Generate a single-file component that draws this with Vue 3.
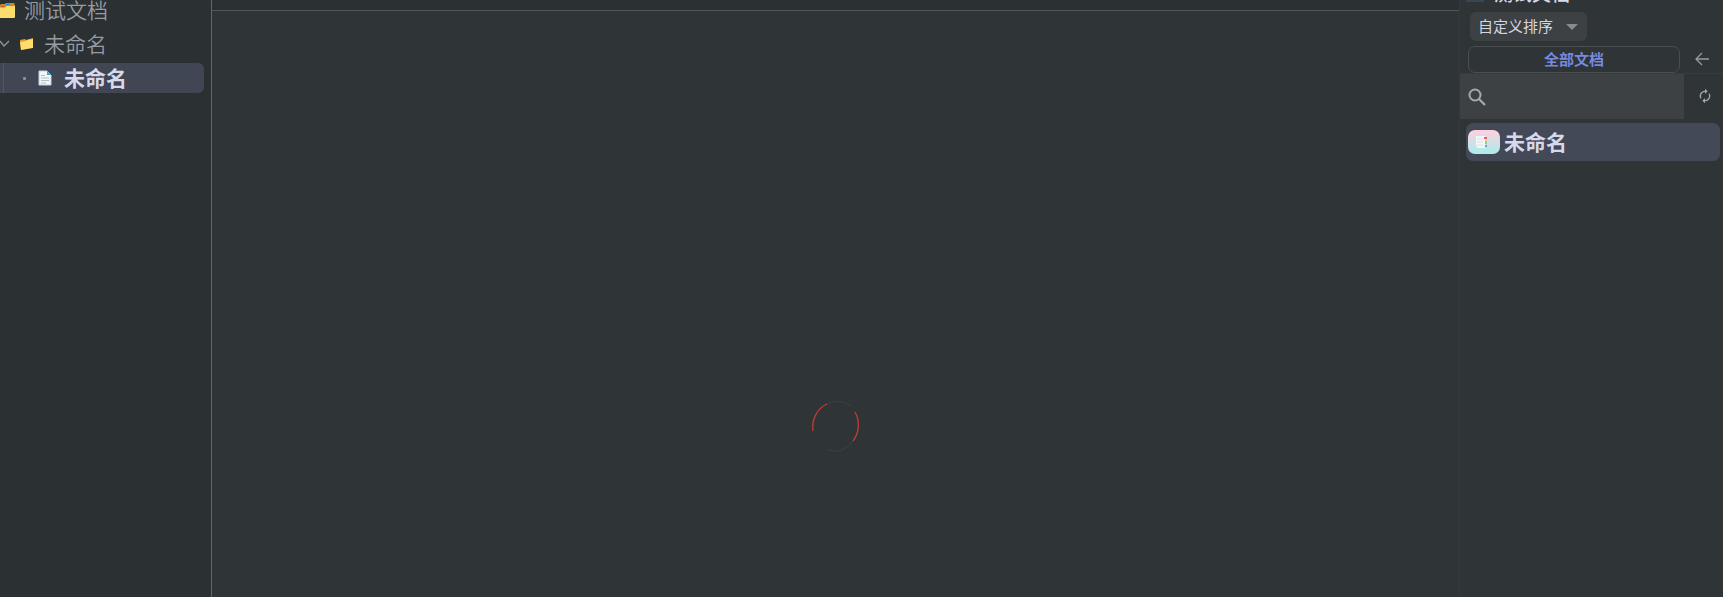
<script setup>
import { ref } from "vue";

const sortMode = ref("自定义排序");
const keyword = ref("");
</script>

<template>
  <div class="workspace">
    <aside class="sidebar">
      <ul class="tree">
        <li class="tree-row tree-row--root">
          <svg class="icon-root" viewBox="0 0 16 16" aria-hidden="true">
            <path d="M0 3l1-1h4l1-1h8l1 2v3H0z" fill="#c98a2c" />
            <path d="M6 1.500h3.500V3H6z" fill="#2591c4" />
            <path d="M1 4h3.500v1.500H1z" fill="#e5492d" />
            <path d="M0 5.500h5l1.500-1.500H15v11a1 1 0 0 1-1 1H0z" fill="#fddc6c" />
          </svg>
          <span>测试文档</span>
        </li>
        <li class="tree-row tree-row--folder">
          <svg class="icon-chevron" viewBox="0 0 10 16" aria-hidden="true">
            <path d="M0 5l4 5 5-5" fill="none" stroke="#8b919b" stroke-width="1.500" />
          </svg>
          <svg class="icon-folder" viewBox="0 0 16 16" aria-hidden="true">
            <path d="M1 4l5-1 1 1 7-2v9L2 14z" fill="#e89b35" />
            <path d="M1 6l6-1 1-1 6-1v9L2 14z" fill="#ffdc6b" />
          </svg>
          <span>未命名</span>
        </li>
        <li class="tree-row tree-row--active">
          <i class="bullet"></i>
          <svg class="icon-page" viewBox="0 0 14 16" aria-hidden="true">
            <path d="M1 1h8l4 4v10H1z" fill="#f3f6f8" stroke="#b9d4e4" />
            <path d="M9 1v4h4z" fill="#4d9cc7" />
            <path d="M3 5.500h4M3 8h8M3 10.500h8M3 13h5" stroke="#b8bdc4" />
          </svg>
          <span>未命名</span>
        </li>
      </ul>
    </aside>

    <main class="editor">
      <div class="editor-bar"></div>
      <div class="editor-body">
        <svg class="spinner" viewBox="0 0 50 54" role="img" aria-label="加载中">
          <g fill="none">
            <path d="M2 31A23 25 0 0 1 16 4M44 12A23 25 0 0 1 42 41" stroke="#c43c35" stroke-width="1.300" />
            <path d="M16 4A23 25 0 0 1 40 6M42 41A23 25 0 0 1 16 50" stroke="#3b4043" />
          </g>
        </svg>
      </div>
    </main>

    <aside class="panel">
      <header class="panel-head">
        <span class="doc-badge"></span>
        <span>测试文档</span>
      </header>

      <div class="sort">
        <select v-model="sortMode" class="sort-select" aria-label="排序方式">
          <option>自定义排序</option>
        </select>
        <svg class="sort-caret" viewBox="0 0 12 6" aria-hidden="true">
          <path d="M0 0h12L6 6z" fill="#878b8f" />
        </svg>
      </div>

      <div class="scope-row">
        <button class="btn-scope" type="button">全部文档</button>
        <button class="btn-icon" type="button" aria-label="返回">
          <svg class="icon-back" viewBox="0 0 16 16" aria-hidden="true">
            <path d="M8 2L2 8l6 6M2 8h13" fill="none" stroke="#959ba5" stroke-width="1.300" />
          </svg>
        </button>
      </div>

      <div class="search-row">
        <label class="search-box">
          <svg class="icon-search" viewBox="0 0 18 18" aria-hidden="true">
            <circle cx="7" cy="7" r="5.500" fill="none" stroke="#a5a9b0" stroke-width="2" />
            <path d="M11 11l6 6" stroke="#a5a9b0" stroke-width="2.200" />
          </svg>
          <input v-model="keyword" class="search-input" type="text" aria-label="搜索文档" />
        </label>
        <button class="btn-icon btn-icon--narrow" type="button" aria-label="刷新">
          <svg class="icon-refresh" viewBox="0 0 24 24" aria-hidden="true">
            <path
              d="M12 6v3l4-4-4-4v3c-4.420 0-8 3.580-8 8 0 1.570.46 3.030 1.240 4.260L6.700 14.800c-.45-.83-.7-1.790-.7-2.800 0-3.310 2.690-6 6-6zm6.760 1.740L17.300 9.200c.44.84.7 1.790.7 2.800 0 3.310-2.690 6-6 6v-3l-4 4 4 4v-3c4.420 0 8-3.580 8-8 0-1.570-.46-3.030-1.240-4.260z"
              fill="#a0a6ad"
            />
          </svg>
        </button>
      </div>

      <ul class="doc-list">
        <li class="doc-item">
          <span class="doc-cover">
            <svg class="icon-tabs" viewBox="0 0 12 12" aria-hidden="true">
              <path d="M0 0h9v12H2l-2-2z" fill="#f4f6f8" />
              <path d="M1 3h6M1 6h6M1 9h6" stroke="#dbe1e7" />
              <path d="M8 1h3v2H8z" fill="#e8606b" />
              <path d="M9 4h2v2H9z" fill="#edbd7d" />
              <path d="M9 6h2v2H9z" fill="#90cf83" />
              <path d="M9 9h2v2H9z" fill="#50a9dd" />
            </svg>
          </span>
          <span>未命名</span>
        </li>
      </ul>
    </aside>
  </div>
</template>

<style>
body {
  background: #2f3437;
}
</style>

<style scoped>
.workspace {
  display: flex;
  height: 100vh;
  overflow: hidden;
  background: #2f3437;
  color: #969ba5;
  font-family: "Noto Sans CJK SC", sans-serif;
}

.workspace * {
  box-sizing: border-box;
}

svg {
  display: block;
  flex: none;
}

ul {
  margin: 0;
  padding: 0;
  list-style: none;
}

.sidebar {
  flex: none;
  width: 212px;
  padding-right: 7px;
  border-right: 1px solid #596393;
  background: #2b3032;
}

.tree {
  margin-top: -5px;
}

.tree-row {
  display: flex;
  align-items: center;
  height: 30px;
  margin-bottom: 4px;
  font-size: 21px;
  font-weight: 350;
  line-height: 28px;
}

.tree-row span {
  padding-bottom: 2px;
}

.tree-row--root {
  gap: 8px;
}

.tree-row--folder {
  gap: 9px;
}

.tree-row--active {
  gap: 12px;
  margin-left: 3px;
  padding-left: 19px;
  border-left: 1px solid #50576a;
  border-radius: 0 6px 6px 0;
  background: #404654;
  box-shadow: -3px 0 #404654;
  color: #d7d9ea;
  font-weight: 700;
}

.icon-root {
  width: 16px;
  height: 16px;
}

.icon-chevron {
  width: 10px;
  height: 16px;
}

.icon-folder {
  width: 16px;
  height: 16px;
}

.icon-page {
  width: 14px;
  height: 16px;
}

.bullet {
  width: 3px;
  height: 3px;
  border-radius: 1px;
  background: #8b919d;
}

.editor {
  display: flex;
  flex: 1;
  flex-direction: column;
  min-width: 0;
}

.editor-bar {
  flex: none;
  height: 11px;
  border-bottom: 1px solid #51565b;
  background: #2b3034;
}

.editor-body {
  display: flex;
  flex: 1;
  align-items: center;
  justify-content: center;
  padding-top: 246px;
}

.spinner {
  width: 50px;
  height: 54px;
}

.panel {
  flex: none;
  width: 264px;
  border-left: 1px solid #34393c;
}

.panel-head {
  display: flex;
  align-items: center;
  gap: 10px;
  height: 30px;
  margin-top: -22px;
  padding-left: 6px;
  color: #d7d9ea;
  font-size: 19px;
  font-weight: 500;
  line-height: 30px;
}

.doc-badge {
  width: 18px;
  height: 18px;
  background: #344955;
}

.sort {
  display: grid;
  align-items: center;
  width: 117px;
  margin: 4px 0 5px 10px;
}

.sort-select {
  grid-area: 1 / 1;
  width: 100%;
  height: 29px;
  padding: 0 8px 2px;
  border: none;
  border-radius: 6px;
  appearance: none;
  background: #3d4144;
  color: #d3d6e2;
  font-family: inherit;
  font-size: 15px;
}

.sort-caret {
  grid-area: 1 / 1;
  justify-self: end;
  width: 12px;
  height: 6px;
  margin-right: 9px;
  pointer-events: none;
}

.scope-row {
  display: flex;
  align-items: center;
  padding-left: 8px;
  border-bottom: 1px solid #363b3e;
}

.btn-scope {
  flex: 1;
  height: 27px;
  padding: 0 0 2px;
  border: 1px solid #494e51;
  border-radius: 7px;
  background: transparent;
  color: #7789df;
  font-family: inherit;
  font-size: 15px;
  font-weight: 700;
  line-height: 23px;
  cursor: pointer;
}

.btn-icon {
  display: flex;
  align-items: center;
  justify-content: center;
  width: 43px;
  height: 27px;
  padding: 0 0 2px;
  border: none;
  background: transparent;
  cursor: pointer;
}

.btn-icon--narrow {
  width: 39px;
  padding-left: 3px;
}

.icon-back {
  width: 16px;
  height: 16px;
}

.search-row {
  display: flex;
  align-items: center;
  height: 45px;
}

.search-box {
  display: flex;
  flex: 1;
  align-items: center;
  gap: 8px;
  height: 100%;
  padding-left: 8px;
  background: #3d4144;
}

.search-input {
  flex: 1;
  min-width: 0;
  height: 100%;
  border: none;
  outline: none;
  background: transparent;
  color: #d7d9ea;
  font-family: inherit;
  font-size: 15px;
}

.icon-search {
  width: 18px;
  height: 18px;
}

.icon-refresh {
  width: 16px;
  height: 16px;
}

.doc-list {
  padding: 4px 3px 0 6px;
}

.doc-item {
  display: flex;
  align-items: center;
  gap: 4px;
  height: 38px;
  padding-left: 2px;
  border-radius: 7px;
  background: #444958;
  color: #d7d9ea;
  font-size: 21px;
  font-weight: 700;
  line-height: 36px;
}

.doc-item > span:last-child {
  padding-bottom: 2px;
}

.doc-cover {
  display: flex;
  align-items: center;
  justify-content: center;
  width: 32px;
  height: 24px;
  padding-right: 4px;
  border-radius: 7px;
  background: linear-gradient(#fed0df, #a8eeea);
}

.icon-tabs {
  width: 12px;
  height: 12px;
}
</style>
